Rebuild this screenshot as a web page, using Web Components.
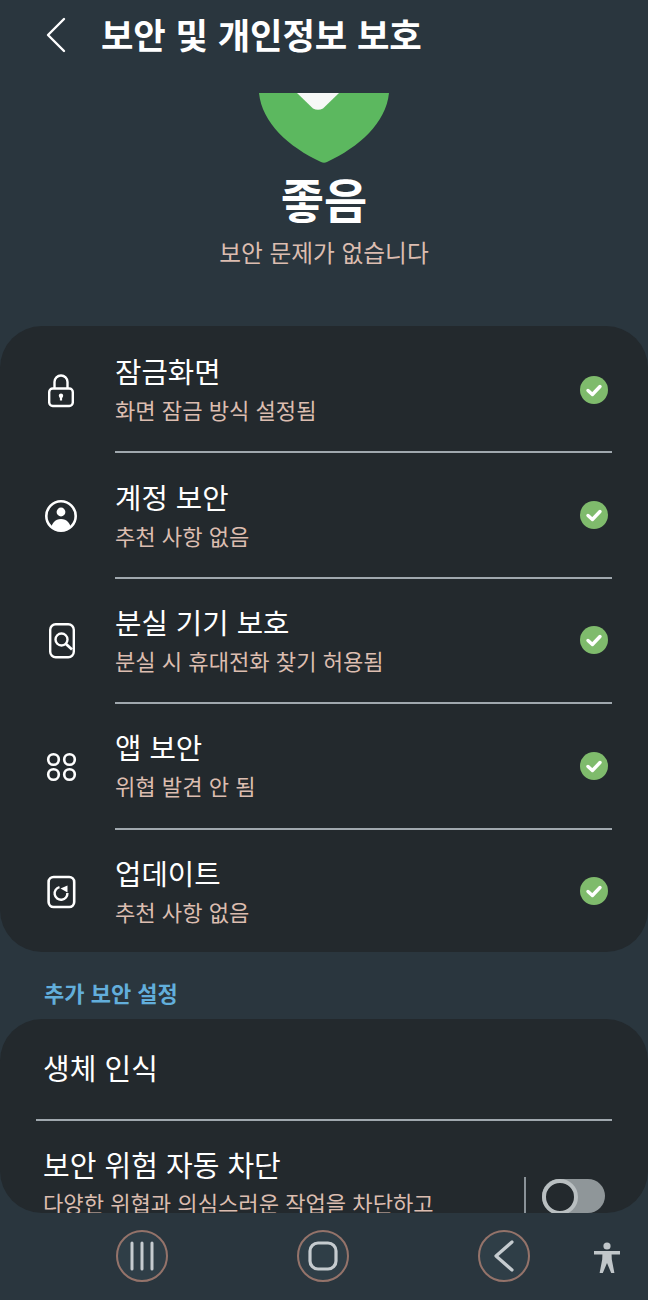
<!DOCTYPE html>
<html lang="ko">
<head>
<meta charset="utf-8">
<title>보안 및 개인정보 보호</title>
<style>
    html, body{
        margin: 0;
        padding: 0;
        background: #2a363e;
    }
    body{
        width: 648px;
        height: 1300px;
        overflow: hidden;
        font-family: "Noto Sans CJK KR", "Noto Sans", sans-serif;
        color: #fff;
    }
</style>
</head>
<body>
<sec-page>
    <sec-header slot="top">보안 및 개인정보 보호</sec-header>
    <sec-hero slot="top">
        <span slot="status">좋음</span>
        <span slot="note">보안 문제가 없습니다</span>
    </sec-hero>

    <sec-card class="main">
        <sec-row check>
            <svg slot="icon" width="36" height="36" viewBox="0 0 36 36" fill="none" stroke="#fff" stroke-width="2.4">
                <path d="M11.5 15.5v-6.5a6.5 6.5 0 0 1 13 0v6.5"/>
                <rect x="6.2" y="15.5" width="23.6" height="17.5" rx="3.5"/>
                <circle cx="18" cy="22.8" r="2.2" fill="#fff" stroke="none"/>
                <path d="M18 23v4.4" stroke-width="2.2"/>
            </svg>
            <span slot="title">잠금화면</span>
            <span slot="sub">화면 잠금 방식 설정됨</span>
        </sec-row>
        <sec-row check>
            <svg slot="icon" width="36" height="36" viewBox="0 0 36 36" fill="none">
                <defs><clipPath id="c"><circle cx="18" cy="18" r="14.5"/></clipPath></defs>
                <circle cx="18" cy="14" r="4.4" fill="#fff"/>
                <path clip-path="url(#c)" d="M7.5 34c0-8 4.5-13 10.5-13s10.5 5 10.5 13z" fill="#fff"/>
                <circle cx="18" cy="18" r="14.7" stroke="#fff" stroke-width="2.6"/>
            </svg>
            <span slot="title">계정 보안</span>
            <span slot="sub">추천 사항 없음</span>
        </sec-row>
        <sec-row check>
            <svg slot="icon" width="36" height="36" viewBox="0 0 36 36" fill="none" stroke="#fff" stroke-width="2.4">
                <rect x="7.2" y="1.2" width="23.6" height="33" rx="5.5"/>
                <circle cx="18.5" cy="16.5" r="6"/>
                <path d="M23 21l6 5.5" stroke-width="2.8"/>
            </svg>
            <span slot="title">분실 기기 보호</span>
            <span slot="sub">분실 시 휴대전화 찾기 허용됨</span>
        </sec-row>
        <sec-row check>
            <svg slot="icon" width="36" height="36" viewBox="0 0 36 36" fill="none" stroke="#fff" stroke-width="2.6">
                <circle cx="10.5" cy="10.5" r="5.3"/>
                <circle cx="26.5" cy="10.5" r="5.3"/>
                <circle cx="10.5" cy="25.5" r="5.3"/>
                <circle cx="26.5" cy="25.5" r="5.3"/>
            </svg>
            <span slot="title">앱 보안</span>
            <span slot="sub">위협 발견 안 됨</span>
        </sec-row>
        <sec-row check last>
            <svg slot="icon" width="36" height="36" viewBox="0 0 36 36" fill="none" stroke="#fff" stroke-width="2.6">
                <rect x="5.6" y="3" width="25.6" height="30" rx="5"/>
                <path d="M16.5 13.2A6.4 6.4 0 1 0 24.4 19" stroke-width="2.4"/>
                <path d="M17.5 14.5L24.5 11.5V18.5z" stroke="none" fill="#fff"/>
            </svg>
            <span slot="title">업데이트</span>
            <span slot="sub">추천 사항 없음</span>
        </sec-row>
    </sec-card>

    <sec-label>추가 보안 설정</sec-label>

    <sec-card class="more">
        <sec-plain line>생체 인식</sec-plain>
        <sec-plain toggle>
            보안 위험 자동 차단
            <span slot="sub">다양한 위협과 의심스러운 작업을 차단하고</span>
        </sec-plain>
    </sec-card>

    <nav-bar slot="nav"></nav-bar>
</sec-page>

<template id="page-tpl">
    <style>
        :host{
            display: flex;
            flex-direction: column;
            height: 1300px;
        }
        .nav{
            margin-top: auto;
        }
    </style>
    <slot name="top"></slot>
    <slot></slot>
    <div class="nav"><slot name="nav"></slot></div>
</template>

<template id="header-tpl">
    <style>
        :host{
            display: flex;
            align-items: center;
            height: 70px;
            padding-left: 46px;
        }
        svg{
            display: block;
        }
        h1{
            margin: 0 0 0 35px;
            padding-bottom: 2px;
            font-size: 35.3px;
            line-height: 68px;
            font-weight: 700;
            letter-spacing: -0.1px;
            color: #fff;
        }
    </style>
    <svg width="20" height="36" viewBox="0 0 20 36" fill="none" stroke="#fff" stroke-width="2.4" stroke-linecap="round" stroke-linejoin="round">
        <path d="M18 2L2 18l16 16"/>
    </svg>
    <h1><slot></slot></h1>
</template>

<template id="hero-tpl">
    <style>
        :host{
            display: flex;
            flex-direction: column;
            align-items: center;
            padding-top: 23px;
            height: 233px;
        }
        svg{
            display: block;
        }
        .status{
            margin-top: 4px;
            font-size: 47px;
            line-height: 62px;
            font-weight: 700;
            color: #fff;
        }
        .note{
            margin-top: 7px;
            font-size: 23.7px;
            line-height: 32px;
            color: #dcbdb0;
        }
    </style>
    <svg width="130" height="70" viewBox="0 0 130 70">
        <path d="M0 0H130C127 30 100 54 68 69Q65 70.5 62 69C30 54 3 30 0 0Z" fill="#5cb85f"/>
        <path d="M38 0H80L64 15.5Q59 18 54 15.5Z" fill="#f6f8f6"/>
    </svg>
    <div class="status"><slot name="status"></slot></div>
    <div class="note"><slot name="note"></slot></div>
</template>

<template id="card-tpl">
    <style>
        :host{
            display: flex;
            flex-direction: column;
            background: #23292d;
            border-radius: 42px;
            overflow: hidden;
        }
        :host(.main){
            height: 624px;
            padding-top: 2px;
        }
        :host(.more){
            height: 194px;
        }
    </style>
    <slot></slot>
</template>

<template id="row-tpl">
    <style>
        :host{
            display: flex;
            flex: none;
            height: 125.4px;
            box-sizing: border-box;
        }
        .icon{
            flex: none;
            width: 36px;
            margin: 0 36px 0 43px;
            display: flex;
            align-items: center;
            justify-content: center;
        }
        .body{
            flex: 1;
            display: flex;
            align-items: center;
            margin-right: 36px;
            padding-right: 4px;
            border-bottom: 2px solid #a0a8ae;
        }
        :host([last]) .body{
            border-bottom-color: transparent;
        }
        .txt{
            flex: 1;
            padding-top: 1px;
        }
        .title{
            font-size: 28.7px;
            line-height: 37px;
            color: #fff;
        }
        .sub{
            margin-top: 2px;
            font-size: 22.1px;
            line-height: 37px;
            color: #dcbdb0;
        }
        svg{
            display: block;
            flex: none;
        }
    </style>
    <div class="icon"><slot name="icon"></slot></div>
    <div class="body">
        <div class="txt">
            <div class="title"><slot name="title"></slot></div>
            <div class="sub"><slot name="sub"></slot></div>
        </div>
        <svg width="28" height="28" viewBox="0 0 28 28">
            <circle cx="14" cy="14" r="14" fill="#7fbb6c"/>
            <path d="M8 14.5l4.4 4L20 10.5" fill="none" stroke="#fff" stroke-width="3.4" stroke-linecap="round" stroke-linejoin="round"/>
        </svg>
    </div>
</template>

<template id="label-tpl">
    <style>
        :host{
            display: block;
            padding-left: 44px;
            height: 67px;
            font-size: 22px;
            line-height: 81px;
            font-weight: 700;
            color: #62aedb;
        }
    </style>
    <slot></slot>
</template>

<template id="plain-tpl">
    <style>
        :host{
            display: block;
            flex: none;
            margin-left: 36px;
            margin-right: 36px;
            position: relative;
        }
        :host([line]){
            height: 100px;
            border-bottom: 2px solid #a0a8ae;
        }
        .t{
            margin-left: 7px;
            font-size: 29px;
            color: #fff;
        }
        :host([line]) .t{
            line-height: 96px;
        }
        :host([toggle]) .t{
            line-height: 40px;
            padding-top: 23px;
        }
        .s{
            margin-left: 7px;
            margin-top: 1px;
            font-size: 22.1px;
            line-height: 35px;
            color: #dcbdb0;
            white-space: nowrap;
        }
        .sw{
            display: none;
        }
        :host([toggle]) .sw{
            display: flex;
            align-items: flex-start;
            position: absolute;
            left: 488px;
            top: 56px;
        }
        .bar{
            width: 2px;
            height: 40px;
            background: #8a9298;
            margin-right: 16px;
        }
        .track{
            width: 63px;
            height: 34px;
            margin-top: 2px;
            border-radius: 18px;
            background: #8f9699;
        }
        .thumb{
            width: 36px;
            height: 36px;
            border-radius: 50%;
            background: #23292d;
            border: 4px solid #b9bfc1;
            box-sizing: border-box;
        }
    </style>
    <div class="t"><slot></slot></div>
    <div class="s"><slot name="sub"></slot></div>
    <div class="sw"><div class="bar"></div><div class="track"><div class="thumb"></div></div></div>
</template>

<template id="nav-tpl">
    <style>
        :host{
            display: flex;
            align-items: center;
            height: 87px;
        }
        .bar{
            display: flex;
            align-items: center;
            height: 52px;
            padding-left: 116px;
            gap: 129px;
            margin-top: -1px;
        }
        .btn{
            width: 52px;
            height: 52px;
            box-sizing: border-box;
            border: 2px solid #94736a;
            border-radius: 50%;
            background: #2f3e47;
            display: flex;
            align-items: center;
            justify-content: center;
        }
        .a11y{
            margin-left: -65px;
            margin-top: 3px;
        }
        svg{
            display: block;
        }
    </style>
    <div class="bar">
        <div class="btn">
            <svg width="26" height="30" viewBox="0 0 26 30" stroke="#c5cbcf" stroke-width="3" stroke-linecap="round">
                <path d="M3 2v26M13 2v26M23 2v26"/>
            </svg>
        </div>
        <div class="btn">
            <svg width="30" height="30" viewBox="0 0 30 30" fill="none" stroke="#c5cbcf" stroke-width="3.2">
                <rect x="2" y="2" width="26" height="26" rx="8"/>
            </svg>
        </div>
        <div class="btn">
            <svg width="22" height="32" viewBox="0 0 22 32" fill="none" stroke="#c5cbcf" stroke-width="3.2" stroke-linecap="round" stroke-linejoin="round">
                <path d="M19 2L3 16l16 14"/>
            </svg>
        </div>
        <svg class="a11y" width="26" height="32" viewBox="0 0 26 32" fill="#c0c6c9">
            <circle cx="13" cy="4" r="3.6"/>
            <path d="M0 9h26v3.6h-8.4l0.2 5 2.6 13.4h-3.2L13 21l-4.2 10H5.6l2.6-13.4 0.2-5H0z"/>
        </svg>
    </div>
</template>

<script>
    class BaseEl extends HTMLElement {
        constructor(tplId) {
            super();
            this.attachShadow({ mode: 'open' });
            this.shadowRoot.appendChild(document.getElementById(tplId).content.cloneNode(true));
        }
    }

    customElements.define('sec-page', class extends BaseEl { constructor() { super('page-tpl'); } });
    customElements.define('sec-header', class extends BaseEl { constructor() { super('header-tpl'); } });
    customElements.define('sec-hero', class extends BaseEl { constructor() { super('hero-tpl'); } });
    customElements.define('sec-card', class extends BaseEl { constructor() { super('card-tpl'); } });
    customElements.define('sec-row', class extends BaseEl { constructor() { super('row-tpl'); } });
    customElements.define('sec-label', class extends BaseEl { constructor() { super('label-tpl'); } });
    customElements.define('sec-plain', class extends BaseEl { constructor() { super('plain-tpl'); } });
    customElements.define('nav-bar', class extends BaseEl { constructor() { super('nav-tpl'); } });
</script>
</body>
</html>
